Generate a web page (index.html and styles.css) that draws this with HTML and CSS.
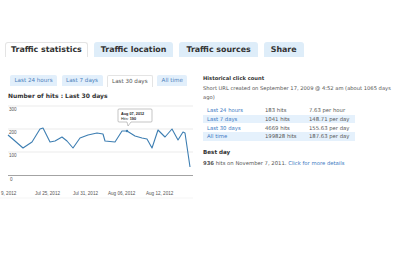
FILE: index.html
```html
<!DOCTYPE html>
<html>
<head>
  <meta charset="utf-8" />
  <title>Traffic statistics</title>
  <link rel="stylesheet" href="styles.css">
</head>
<body>
  <!-- Main tabs -->
  <div class="tabs">
    <span class="tab active">Traffic statistics</span>
    <span class="tab">Traffic location</span>
    <span class="tab">Traffic sources</span>
    <span class="tab">Share</span>
  </div>

  <div class="columns">
    <!-- Chart column -->
    <div class="left">
      <div class="ranges">
        <span class="range">Last 24 hours</span>
        <span class="range">Last 7 days</span>
        <span class="range active">Last 30 days</span>
        <span class="range">All time</span>
      </div>
      <h3 class="chart-title">Number of hits : Last 30 days</h3>
      <svg class="chart" viewBox="0 102 195 100" width="195" height="100">
        <g class="grid">
          <line x1="8" y1="107" x2="193" y2="107" />
          <line x1="8" y1="130" x2="193" y2="130" />
          <line x1="8" y1="153" x2="193" y2="153" />
        </g>
        <line class="axis" x1="8" y1="176.5" x2="193" y2="176.5" />
        <line class="base" x1="0" y1="199" x2="193" y2="199" />
        <g class="ylabels">
          <text x="9" y="111.5">300</text>
          <text x="9" y="134.5">200</text>
          <text x="9" y="157.5">100</text>
          <text x="10" y="181.5">0</text>
        </g>
        <g class="xlabels">
          <text x="1" y="196">9, 2012</text>
          <text x="35" y="196">Jul 25, 2012</text>
          <text x="73" y="196">Jul 31, 2012</text>
          <text x="108" y="196">Aug 06, 2012</text>
          <text x="146" y="196">Aug 12, 2012</text>
        </g>
        <polyline class="line" points="8,136 15,142 23,149 32,143 40,130 43,129 50,143 55,142 62,138 67,142 73,149 80,139 88,136 97,134 103,135 105,142 115,143 122,132 127,132 135,137 142,139 147,140 152,149 158,131 165,138 172,130 178,141 183,133 185,134 190,168" />
        <circle class="dot" cx="127" cy="132" r="1.2" />
        <g class="tip">
          <path d="M119 110 H151 Q152 110 152 111 V122 Q152 123 151 123 H131 L128 127 L127 123 H119 Q118 123 118 122 V111 Q118 110 119 110 Z" />
          <text x="121" y="115.5" class="tip-date">Aug 07, 2012</text>
          <text x="121" y="121">Hits: <tspan class="tip-val">190</tspan></text>
        </g>
      </svg>
    </div>

    <!-- Numbers column -->
    <div class="right">
      <h3 class="hist">Historical click count</h3>
      <p class="created">Short URL created on September 17, 2009 @ 4:52 am (about 1065 days ago)</p>
      <table class="counts">
        <tr><td><a href="#">Last 24 hours</a></td><td>183 hits</td><td>7.63 per hour</td></tr>
        <tr class="alt"><td><a href="#">Last 7 days</a></td><td>1041 hits</td><td>148.71 per day</td></tr>
        <tr><td><a href="#">Last 30 days</a></td><td>4669 hits</td><td>155.63 per day</td></tr>
        <tr class="alt"><td><a href="#">All time</a></td><td>199828 hits</td><td>187.63 per day</td></tr>
      </table>
      <h3 class="best">Best day</h3>
      <p class="best-line"><b>936</b> hits on November 7, 2011. <a href="#">Click for more details</a></p>
    </div>
  </div>
</body>
</html>
```

FILE: styles.css
```css
body {
  margin: 0;
  font-family: "DejaVu Sans", Verdana, sans-serif;
  color: #333;
  background: #fff;
}
a {
  color: #3b78c2;
  text-decoration: none;
}
.tabs {
  display: flex;
  gap: 6px;
  margin-top: 42px;
  padding-left: 5px;
}
.tab {
  height: 15px;
  line-height: 15px;
  padding: 0 7px;
  font-size: 7.9px;
  font-weight: bold;
  background: #deedf9;
  border-radius: 3px 3px 0 0;
  box-sizing: border-box;
}
.tab.active {
  background: #fff;
  border: 1px solid #e4e4e4;
  border-bottom: none;
  line-height: 14px;
  padding: 0 5px;
}
.columns {
  display: grid;
  grid-template-columns: 195px 1fr;
}
.left {
  padding-left: 8px;
}
.ranges {
  display: flex;
  gap: 4.5px;
  margin-top: 18px;
  padding-left: 2px;
}
.range {
  height: 11px;
  line-height: 11px;
  padding: 0 4.5px;
  font-size: 5.6px;
  color: #4b80bb;
  background: #e2effb;
  border-radius: 2px 2px 0 0;
}
.range.active {
  background: #fff;
  color: #555;
  border: 1px solid #e4e4e4;
  border-bottom: none;
  line-height: 10px;
  padding: 0 4px;
}
.chart-title {
  margin: 5px 0 0;
  font-size: 6px;
  font-weight: bold;
  color: #333;
}
.chart {
  display: block;
  margin-left: -8px;
  margin-top: 2px;
}
.grid line {
  stroke: #e6e6e6;
  stroke-width: 0.8;
}
.axis {
  stroke: #8c8c8c;
  stroke-width: 0.8;
}
.base {
  stroke: #eeeeee;
  stroke-width: 0.6;
}
.ylabels text, .xlabels text {
  font-family: "Liberation Sans", Arial, sans-serif;
  font-size: 4.6px;
  fill: #555;
}
.line {
  fill: none;
  stroke: #3d7eb2;
  stroke-width: 1.1;
  stroke-linejoin: round;
}
.dot {
  fill: #3d7eb2;
}
.tip path {
  fill: #fff;
  stroke: #8a8a8a;
  stroke-width: 0.5;
}
.tip text {
  font-family: "Liberation Sans", Arial, sans-serif;
  font-size: 3.8px;
  fill: #222;
}
.tip-date, .tip-val {
  font-weight: bold;
}
.right {
  padding-left: 8px;
  padding-right: 4px;
}
.right h3 {
  margin: 0;
  font-size: 5.6px;
  font-weight: bold;
  color: #333;
}
.right h3.hist {
  margin-top: 18px;
  font-size: 5.2px;
}
.created {
  margin: 3px 0 0;
  font-size: 5.2px;
  line-height: 8.5px;
  color: #555;
}
.counts {
  margin-top: 5px;
  width: 152px;
  border-collapse: collapse;
  font-size: 5.3px;
  color: #555;
}
.counts td {
  height: 8.7px;
  padding: 0 0 0 4px;
  white-space: nowrap;
}
.counts td:nth-child(1) { width: 54px; }
.counts td:nth-child(2) { width: 40px; }
.counts tr.alt {
  background: #e5f1fc;
}
.right h3.best {
  margin-top: 8px;
}
.best-line {
  margin: 5px 0 0;
  font-size: 5.3px;
  color: #555;
}
```
